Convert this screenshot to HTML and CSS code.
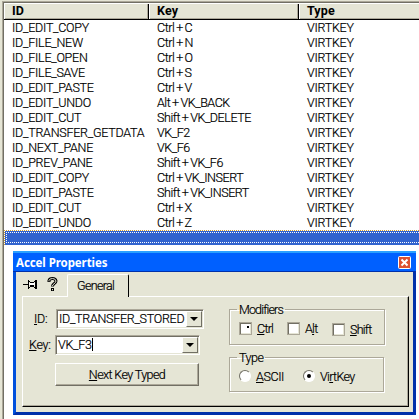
FILE: index.html
```
<!DOCTYPE html>
<html lang="en">
<head>
<meta charset="utf-8">
<title>Accelerator Editor</title>
<link rel="stylesheet" href="styles.css">
</head>
<body>
<div class="window">
<div class="list">
  <div class="row head"><span>ID</span><span>Key</span><span>Type</span></div>
  <div class="row"><span>ID_EDIT_COPY</span><span>Ctrl + C</span><span>VIRTKEY</span></div>
  <div class="row"><span>ID_FILE_NEW</span><span>Ctrl + N</span><span>VIRTKEY</span></div>
  <div class="row"><span>ID_FILE_OPEN</span><span>Ctrl + O</span><span>VIRTKEY</span></div>
  <div class="row"><span>ID_FILE_SAVE</span><span>Ctrl + S</span><span>VIRTKEY</span></div>
  <div class="row"><span>ID_EDIT_PASTE</span><span>Ctrl + V</span><span>VIRTKEY</span></div>
  <div class="row"><span>ID_EDIT_UNDO</span><span>Alt + VK_BACK</span><span>VIRTKEY</span></div>
  <div class="row"><span>ID_EDIT_CUT</span><span>Shift + VK_DELETE</span><span>VIRTKEY</span></div>
  <div class="row"><span>ID_TRANSFER_GETDATA</span><span>VK_F2</span><span>VIRTKEY</span></div>
  <div class="row"><span>ID_NEXT_PANE</span><span>VK_F6</span><span>VIRTKEY</span></div>
  <div class="row"><span>ID_PREV_PANE</span><span>Shift + VK_F6</span><span>VIRTKEY</span></div>
  <div class="row"><span>ID_EDIT_COPY</span><span>Ctrl + VK_INSERT</span><span>VIRTKEY</span></div>
  <div class="row"><span>ID_EDIT_PASTE</span><span>Shift + VK_INSERT</span><span>VIRTKEY</span></div>
  <div class="row"><span>ID_EDIT_CUT</span><span>Ctrl + X</span><span>VIRTKEY</span></div>
  <div class="row"><span>ID_EDIT_UNDO</span><span>Ctrl + Z</span><span>VIRTKEY</span></div>
  <div class="selected"><div class="focus"></div></div>
</div>
</div>
<div class="dialog">
  <div class="titlebar"><span>Accel Properties</span>
    <svg class="close" width="13" height="13" viewBox="0 0 13 13"><rect x=".5" y=".5" width="12" height="12" rx="1" fill="#dd5130" stroke="#fff"/><path d="M3.5 3.5l6 6M9.5 3.5l-6 6" stroke="#fff" stroke-width="2"/></svg>
  </div>
  <div class="client">
    <div class="tabs">
      <svg class="pin" width="15" height="11" viewBox="0 0 15 11" shape-rendering="crispEdges"><path d="M0 5h6v1H0zM5 1h1v9H5zM6 2h1v1H6zM6 8h1v1H6zM7 3h4v1H7zM7 6h4v2H7zM11 2h1v1h-1zM11 8h1v1h-1zM12 1h1v9h-1zM13 1h1v9h-1z" fill="#000"/><path d="M6 4h6v2H6z" fill="#fff"/></svg>
      <svg class="help" width="11" height="15" viewBox="0 0 11 15"><path d="M2 5V3.500Q2.500 1.500 5.500 1.500T9 4Q9 5.500 7 6.800Q5.500 7.800 5.500 9.500M5.500 11v3" fill="none" stroke="#000" stroke-width="3"/><path d="M2 4.300V3.500Q2.500 1.500 5.500 1.500T9 4Q9 5.500 7 6.800Q5.500 7.800 5.500 9M5.500 12v1.200" fill="none" stroke="#e5e5d5" stroke-width="1"/></svg>
      <div class="tab">General</div>
    </div>
    <div class="panel">
      <div class="left">
        <div class="field id"><label><u>I</u>D:</label><div class="combo"><span>ID_TRANSFER_STORED</span><i class="drop"></i></div></div>
        <div class="field key"><label><u>K</u>ey:</label><div class="combo"><span>VK_F3</span><b class="caret"></b><i class="drop"></i></div></div>
        <div class="next"><span><u>N</u>ext Key Typed</span></div>
      </div>
      <div class="right">
        <fieldset class="mods"><legend>Modifiers</legend>
          <div class="opts"><i class="check marked"></i><span class="ctrl"><u>C</u>trl</span><i class="check"></i><span class="alt">A<u>l</u>t</span><i class="check low"></i><span class="shift"><u>S</u>hift</span></div>
        </fieldset>
        <fieldset class="type"><legend>Type</legend>
          <div class="opts"><i class="radio"></i><span class="ascii"><u>A</u>SCII</span><i class="radio on"></i><span class="virt">Vi<u>r</u>tKey</span></div>
        </fieldset>
      </div>
    </div>
  </div>
</div>
</body>
</html>
```
FILE: styles.css
```
* { box-sizing: border-box; }
body { margin: 0; width: 419px; height: 419px; overflow: hidden; background: #e5e5d5; color: #000; font: 300 12.5px/15px Roboto, "Liberation Sans", sans-serif; white-space: nowrap; -webkit-text-stroke: .2px #000; }
u { text-decoration: underline; text-decoration-thickness: 1px; text-underline-offset: 1px; }
.window { height: 419px; border-top: 1px solid #e5e5d5; padding-left: 2px; }
.list { height: 418px; background: #fff; border-left: 1px solid #aca899; border-top: 1px solid #aca899; box-shadow: inset 1px 1px #716f64; padding: 1px 0 0 1px; }
.row { display: grid; grid-template-columns: 145px 150px 1fr; height: 15px; }
.row span { padding: 0 0 0 8px; letter-spacing: -.25px; line-height: 15px; }
.row span:nth-child(2) { letter-spacing: -.45px; word-spacing: -.8px; }
.head { height: 17px; background: #e5e5d5; border-top: 1px solid #fff; border-bottom: 1px solid #000; -webkit-text-stroke: 0; }
.row.head span { font-weight: 700; line-height: 14px; height: 15px; letter-spacing: .1px; border-right: 1px solid #000; border-left: 1px solid #fff; box-shadow: inset -1px -1px #aca899; padding-left: 7px; }
.row.head span:last-child { border-right: 0; box-shadow: inset 0 -1px #aca899; }
.selected { height: 15px; background:
    linear-gradient(#3163ce, #3163ce) 1px 1px no-repeat,
    repeating-linear-gradient(90deg, #ce9c31 0 1px, #fff 1px 2px) 0 0 / 100% 1px no-repeat,
    repeating-linear-gradient(#ce9c31 0 1px, #fff 1px 2px) 0 0 / 1px 100% no-repeat;
  padding: 2px 0 2px 2px; }
.focus { height: 11px; background: repeating-linear-gradient(90deg, #fff 0 1px, transparent 1px 2px) 0 0 / 100% 1px no-repeat, repeating-linear-gradient(90deg, #fff 0 1px, transparent 1px 2px) 0 100% / 100% 1px no-repeat, repeating-linear-gradient(#fff 0 1px, transparent 1px 2px) 0 0 / 1px 100% no-repeat; }
.dialog { position: absolute; left: 13px; top: 251px; width: 403px; height: 164px; background: #0055e5; border: 3px solid #0050dd; border-top: 0; border-right-color: #0030aa; border-bottom-color: #0030aa; }
.titlebar { height: 21px; margin: 0 -3px; padding: 1px 5px 0 3px; display: flex; justify-content: space-between; border-top: 2px solid #2aa0ff; border-bottom: 1px solid #0030aa; background: #0060ff; color: #fff; font: bold 11.5px/18px "Noto Sans", sans-serif; letter-spacing: -.08px; -webkit-text-stroke: 0; }
.close { margin-top: 2px; }
.client { height: 140px; background: #e5e5d5; padding: 2px 4px 5px 6px; }
.tabs { height: 22px; display: flex; position: relative; }
.pin { margin: 5px 0 0 1px; }
.help { margin: 3px 0 0 9px; }
.tab { width: 62px; height: 23px; margin-left: 9px; background: #e5e5d5; border: 1px solid #fff; border-bottom: 0; border-right: 1px solid #000; border-radius: 2px 2px 0 0; padding-left: 9px; line-height: 22px; letter-spacing: -.65px; }
.panel { height: 111px; border: 1px solid #fff; border-right-color: #000; border-bottom-color: #000; box-shadow: inset -1px -1px #aca899; display: grid; grid-template-columns: 206px 1fr; }
.field { display: flex; letter-spacing: -.28px; }
.id { margin-top: 12px; }
.id label { width: 33px; padding-left: 11px; line-height: 19px; }
.key { margin-top: 6px; }
.key label { width: 32px; padding-left: 6px; line-height: 19px; }
.combo { display: flex; width: 148px; height: 20px; background: #fff; border: 1px solid #aca899; border-right-color: #fff; border-bottom-color: #fff; box-shadow: inset 1px 1px #716f64, inset -1px -1px #e5e5d5; line-height: 18px; padding: 1px 1px 1px 2px; }
.key .combo { width: 145px; }
.combo span { line-height: 16px; }
.caret { width: 1px; height: 13px; background: #000; margin-top: 1px; }
.drop { width: 16px; height: 16px; margin-left: auto; background: #e5e5d5; border: 1px solid #fff; border-right-color: #716f64; border-bottom-color: #716f64; display: flex; align-items: center; justify-content: center; }
.drop::after { content: ""; border: 4px solid transparent; border-top-color: #000; border-bottom: 0; }
.next { margin: 8px 0 0 32px; width: 144px; height: 23px; border: 1px solid #fff; border-right-color: #716f64; border-bottom-color: #716f64; box-shadow: inset -1px -1px #aca899; text-align: center; line-height: 21px; letter-spacing: -.6px; }
fieldset { margin: 0; padding: 0; border: 1px solid #aca899; box-shadow: 1px 1px #fff, inset 1px 1px #fff; min-width: 0; }
legend { margin-left: 7px; padding: 0 2px; height: 15px; line-height: 15px; letter-spacing: -.85px; }
.mods { width: 156px; height: 43px; margin-top: 5px; }
.type { width: 155px; height: 42px; margin-top: 5px; }
.type legend { letter-spacing: -.5px; }
.opts { display: flex; margin-top: 5px; padding-left: 9px; letter-spacing: -.75px; }
.check { width: 13px; height: 13px; background: #fff; border: 1px solid #aca899; box-shadow: inset 1px 1px #716f64, inset -1px -1px #e5e5d5; }
.marked::after { content: ""; display: block; width: 2px; height: 2px; background: #000; margin: 3px 0 0 7px; }
.opts span { padding-left: 5px; margin-top: -1px; }
.ctrl { width: 35px; }
.alt { width: 32px; }
.low { margin-top: 1px; }
.opts .shift { margin-top: 0; }
.radio { width: 12px; height: 12px; border-radius: 50%; background: #fff; border: 1px solid; border-color: #716f64 #fff #fff #716f64; display: flex; align-items: center; justify-content: center; }
.on::after { content: ""; width: 4px; height: 4px; border-radius: 50%; background: #000; }
.opts .ascii { width: 52px; letter-spacing: -.4px; }
.opts .virt { letter-spacing: -.65px; }
```
